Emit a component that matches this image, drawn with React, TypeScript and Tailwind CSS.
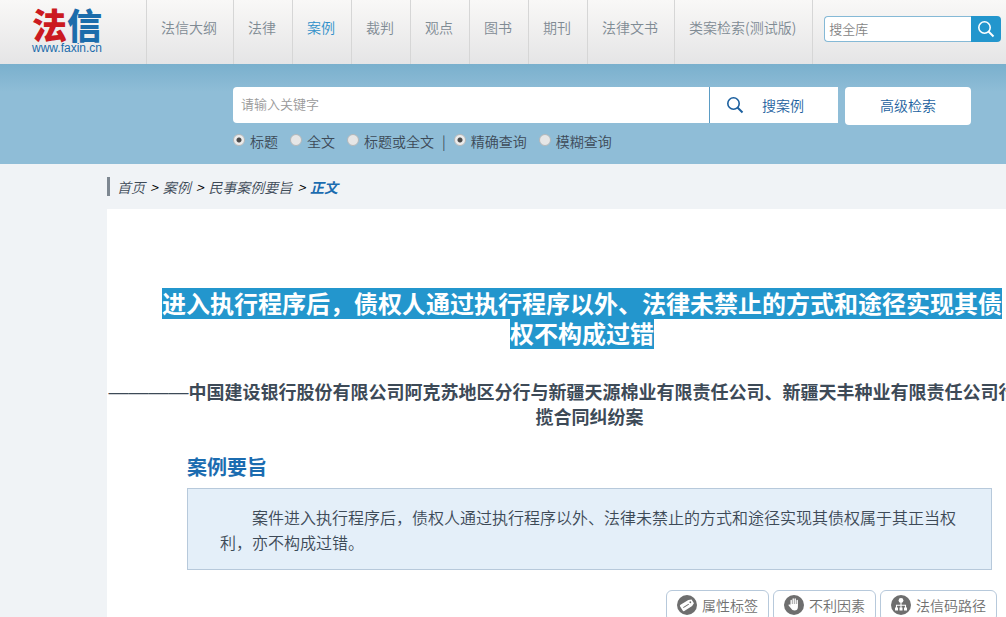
import { useState } from "react";

const navItems = [
  "法信大纲",
  "法律",
  "案例",
  "裁判",
  "观点",
  "图书",
  "期刊",
  "法律文书",
  "类案检索(测试版)",
];

const fields = ["标题", "全文", "标题或全文"];
const modes = ["精确查询", "模糊查询"];

function SearchIcon({ className }: { className: string }) {
  return (
    <svg viewBox="0 0 18 18" fill="none" stroke="currentColor" className={className}>
      <circle cx="7.5" cy="7.5" r="5.7" strokeWidth="1.6" />
      <path d="M11.5 11.5 L16.5 16.5" strokeWidth="2" />
    </svg>
  );
}

function TagIcon() {
  return (
    <svg viewBox="0 0 20 20" className="size-5">
      <circle cx="10" cy="10" r="10" fill="#6e6e6e" />
      <g transform="rotate(-32 10 10)">
        <path
          d="M4.6 6.4h9.2l3 1.4v4.4l-3 1.4H4.6a1.2 1.2 0 0 1-1.2-1.2V7.6a1.2 1.2 0 0 1 1.2-1.2z"
          fill="#fff"
        />
        <path d="M5.5 10.2h6.5" stroke="#6e6e6e" strokeWidth="0.9" />
        <circle cx="14.3" cy="9.4" r="0.9" fill="#6e6e6e" />
      </g>
    </svg>
  );
}

function HandIcon() {
  return (
    <svg viewBox="0 0 20 20" className="size-5">
      <circle cx="10" cy="10" r="10" fill="#6e6e6e" />
      <g stroke="#fff" strokeWidth="1.4" strokeLinecap="round">
        <path d="M7.2 10V5.4M9.2 10V4M11.2 10V4M13.2 10V5.4" />
      </g>
      <path
        d="M6.5 9h7.4v3.2c0 2-1.2 3.3-3.3 3.3-1.8 0-2.7-.7-3.5-1.9L4.6 10.4c-.4-.8.6-1.3 1.1-.8l.8.9z"
        fill="#fff"
      />
    </svg>
  );
}

function TreeIcon() {
  return (
    <svg viewBox="0 0 20 20" className="size-5">
      <circle cx="10" cy="10" r="10" fill="#6e6e6e" />
      <circle cx="10" cy="5.4" r="2.4" fill="#fff" />
      <path
        d="M10 7v6M5.5 13v-2.7h9V13"
        fill="none"
        stroke="#fff"
        strokeWidth="1.1"
      />
      <path d="M4 12.4h3v3H4zM8.5 12.4h3v3h-3zM13 12.4h3v3h-3z" fill="#fff" />
    </svg>
  );
}

const tools = [
  { label: "属性标签", icon: <TagIcon /> },
  { label: "不利因素", icon: <HandIcon /> },
  { label: "法信码路径", icon: <TreeIcon /> },
];

type RadioProps = {
  name: string;
  label: string;
  checked: boolean;
  onChange: () => void;
};

function Radio({ name, label, checked, onChange }: RadioProps) {
  return (
    <label className="flex items-center gap-[5px]">
      <input
        type="radio"
        name={name}
        checked={checked}
        onChange={onChange}
        className="mb-[2px] size-3 appearance-none rounded-full border border-[#b4b8ba] bg-[#e6e6e6] checked:bg-[radial-gradient(circle,#4a4a4a_0,#4a4a4a_2px,#ececec_3px)]"
      />
      {label}
    </label>
  );
}

export default function App() {
  const [field, setField] = useState("标题");
  const [mode, setMode] = useState("精确查询");

  return (
    <div className="min-h-screen overflow-x-hidden bg-[#f0f3f6] font-['Noto_Sans_CJK_SC',sans-serif] text-sm font-[350] text-[#3d4a57]">
      <header className="flex h-16 bg-linear-to-b from-[#f9f8f7] to-[#e5e5e6]">
        <a href="#" className="flex w-[146px] shrink-0 flex-col pt-[6px] pl-8">
          <span className="text-[35px] leading-9 font-black text-[#1b6cab]">
            <span className="text-[#cb1a20]">法</span>信
          </span>
          <span className="font-['Liberation_Sans',sans-serif] text-xs leading-3 font-normal text-[#1b6cab]">
            www.faxin.cn
          </span>
        </a>

        <nav className="flex shrink-0 border-r border-[#d6d6d6] whitespace-nowrap">
          {navItems.map((item) => (
            <a
              key={item}
              href="#"
              className={`flex items-center border-l border-[#d6d6d6] pr-4 pb-[10px] pl-[14px] ${
                item === "案例" ? "text-[#2e8fc9]" : "text-[#7f8b94]"
              }`}
            >
              {item}
            </a>
          ))}
        </nav>

        <form className="mt-4 ml-[11px] flex h-[26px]">
          <input
            type="text"
            aria-label="搜全库"
            placeholder="搜全库"
            className="w-[147px] rounded-l border border-r-0 border-[#85b9d6] bg-white px-1 text-[13px] outline-none placeholder:text-[#858585]"
          />
          <button
            type="button"
            aria-label="搜索"
            className="flex w-[30px] items-center justify-center rounded-r bg-[#2396cd] text-white"
          >
            <SearchIcon className="size-[18px]" />
          </button>
        </form>
      </header>

      <section className="h-[100px] bg-[linear-gradient(#7ab0cd_0,#8fbdd7_28px)] pt-[23px] pl-[233px]">
        <form className="flex max-w-[738px] items-start gap-[7px] text-[#1b5f9e]">
          <div className="flex h-9 flex-1">
            <input
              type="text"
              aria-label="关键字"
              placeholder="请输入关键字"
              className="min-w-0 flex-1 rounded-l bg-white px-2 pb-[2px] text-[13px] outline-none placeholder:text-[#999]"
            />
            <button
              type="button"
              className="flex w-[129px] items-center gap-[18px] border-l border-[#5b9cc4] bg-white pl-4"
            >
              <SearchIcon className="size-[18px]" />
              搜案例
            </button>
          </div>
          <button type="button" className="h-[38px] w-[126px] rounded bg-white pb-[3px]">
            高级检索
          </button>
        </form>

        <div className="mt-[6px] flex items-center gap-3 leading-5">
          {fields.map((f) => (
            <Radio
              key={f}
              name="field"
              label={f}
              checked={field === f}
              onChange={() => setField(f)}
            />
          ))}
          <span className="-mx-1">|</span>
          {modes.map((m) => (
            <Radio
              key={m}
              name="mode"
              label={m}
              checked={mode === m}
              onChange={() => setMode(m)}
            />
          ))}
        </div>
      </section>

      <main className="pl-[107px]">
        <nav className="flex h-[45px] items-center">
          <div className="flex h-[19px] items-center gap-[5px] border-l-[3px] border-[#7d8791] pl-[7px] italic">
            <a href="#">首页</a>
            <span className="text-black">&gt;</span>
            <a href="#">案例</a>
            <span className="text-black">&gt;</span>
            <a href="#">民事案例要旨</a>
            <span className="text-black">&gt;</span>
            <span className="font-bold text-[#1b6cb0]">正文</span>
          </div>
        </nav>

        <article className="min-w-[965px] bg-white pt-[81px]">
          <h1 className="pr-[65px] pl-[50px] text-center font-['Liberation_Sans','Noto_Sans_CJK_SC',sans-serif] text-2xl leading-[30px] font-bold text-white">
            <span className="bg-[#2396cd] pt-[3px] pb-px">
              进入执行程序后，债权人通过执行程序以外、法律未禁止的方式和途径实现其债权不构成过错
            </span>
          </h1>

          <h2 className="mt-[29px] text-center text-lg leading-[25px] font-bold">
            <span className="font-['Liberation_Sans',sans-serif] text-xl leading-none font-normal">
              ————
            </span>
            中国建设银行股份有限公司阿克苏地区分行与新疆天源棉业有限责任公司、新疆天丰种业有限责任公司行加工承揽合同纠纷案
          </h2>

          <section className="mx-20">
            <h3 className="mt-[25px] text-xl leading-[25px] font-bold text-[#1b6cb0]">
              案例要旨
            </h3>
            <p className="mt-[9px] border border-[#b7c9db] bg-[#e4eff9] px-8 pt-4 pb-[14px] indent-8 text-base leading-[25px]">
              案件进入执行程序后，债权人通过执行程序以外、法律未禁止的方式和途径实现其债权属于其正当权利，亦不构成过错。
            </p>
          </section>

          <div className="mt-5 flex justify-end gap-1 pr-[75px] text-[#707070]">
            {tools.map((tool) => (
              <button
                key={tool.label}
                type="button"
                className="flex h-8 items-center gap-[5px] rounded-md border border-[#b7c9db] bg-white px-[10px] pb-[2px]"
              >
                {tool.icon}
                {tool.label}
              </button>
            ))}
          </div>
        </article>
      </main>
    </div>
  );
}
